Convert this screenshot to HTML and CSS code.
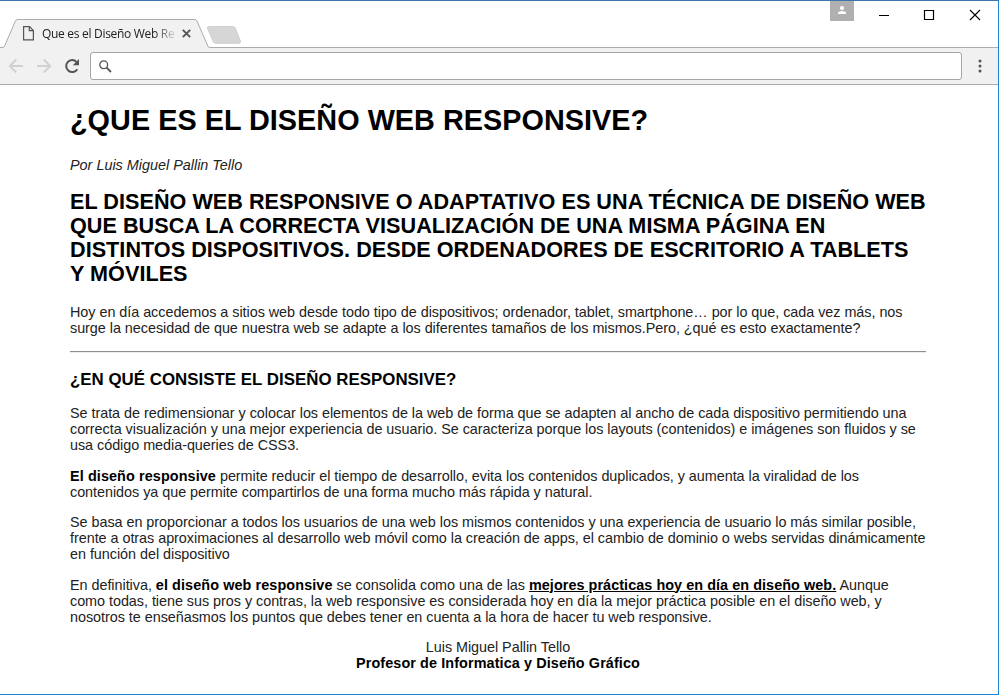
FILE: index.html
```html
<!DOCTYPE html>
<html lang="es">
<head>
<meta charset="utf-8">
<title>Que es el Diseño Web Responsive</title>
<link rel="stylesheet" href="styles.css">
</head>
<body>
<div class="window">
  <header class="titlebar">
    <div class="tab">
      <svg class="tab-shape" width="211" height="29" viewBox="0 0 211 29"><path d="M0 28.5H2.5Q4 28.5 4.6 27L15.4 2Q16.2.5 18 .5H194.500Q196.300.5 197 2L207.800 27Q208.400 28.500 210 28.500H211V29H0Z" fill="#f1f1f1"/><path d="M0 28.5H2.500Q4 28.5 4.600 27L15.400 2Q16.200.5 18 .5H194.500Q196.300.5 197 2L207.800 27Q208.400 28.500 210 28.500H211" fill="none" stroke="#ababab"/></svg>
      <div class="tab-content">
        <svg width="11" height="15" viewBox="0 0 11 15" fill="none" stroke="#555" stroke-width="1.2"><path d="M.6.600H6.500L10.400 4.500V13.900H.6ZM6.300.8V4.700H10.200"/></svg>
        <span class="tab-title">Que es el Diseño Web Re</span>
        <svg width="9" height="9" viewBox="0 0 9 9" stroke="#555" stroke-width="1.9"><path d="M.8.8 8.200 8.200M8.200.8.800 8.200"/></svg>
      </div>
    </div>
    <svg class="new-tab" width="36" height="18" viewBox="0 0 36 18"><path d="M2.500.5H26.500Q28.500.5 29.300 2L34.500 15Q35 17.300 33 17.300H10Q8 17.300 7.300 15.800L1.500 2.500Q.8.500 2.500.5Z" fill="#d6d6d6" stroke="#c9c9c9" stroke-width=".8"/></svg>
    <div class="controls">
      <svg class="user" width="24" height="20" viewBox="0 0 24 20"><path d="M0 0H24V20H0Z" fill="#b0b0b0"/><circle cx="12" cy="7" r="2.100" fill="#fff"/><path d="M8 13V11.800Q8.500 10 12 10T16 11.800V13Z" fill="#fff"/></svg>
      <svg class="buttons" width="104" height="12" viewBox="0 0 104 12" fill="none" stroke="#000"><path d="M1 6.500H11"/><path d="M46.500 1.500H55.500V10.500H46.500Z" stroke-width="1.200"/><path d="M92 1 102 11M102 1 92 11" stroke-width="1.100"/></svg>
    </div>
  </header>
  <nav class="toolbar">
    <svg class="nav" width="74" height="16" viewBox="0 0 74 16" fill="none" stroke="#d0d0d0" stroke-width="1.800"><path d="M15 8H2M8.300 1.500 1.800 8 8.300 14.500M29 8H42M35.700 1.500 42.200 8 35.700 14.500"/><path d="M69.300 11.200A6 6 0 1 1 68.500 3.900" stroke="#555" stroke-width="2"/><path d="M71 1V7.200H64.800Z" fill="#555" stroke="none"/></svg>
    <div class="address">
      <svg width="13" height="13" viewBox="0 0 13 13" fill="none" stroke="#555"><circle cx="4.700" cy="4.700" r="3.900" stroke-width="1.300"/><path d="M7.600 7.600 12 12" stroke-width="1.800"/></svg>
    </div>
    <svg class="menu" width="4" height="14" viewBox="0 0 4 14" fill="#555"><circle cx="2" cy="2" r="1.500"/><circle cx="2" cy="7" r="1.500"/><circle cx="2" cy="12" r="1.500"/></svg>
  </nav>
  <main>
    <h1>¿QUE ES EL DISEÑO WEB RESPONSIVE?</h1>
    <p><em>Por Luis Miguel Pallin Tello</em></p>
    <h2>EL DISEÑO WEB RESPONSIVE O ADAPTATIVO ES UNA TÉCNICA DE DISEÑO WEB<br>QUE BUSCA LA CORRECTA VISUALIZACIÓN DE UNA MISMA PÁGINA EN<br>DISTINTOS DISPOSITIVOS. DESDE ORDENADORES DE ESCRITORIO A TABLETS<br>Y MÓVILES</h2>
    <p>Hoy en día accedemos a sitios web desde todo tipo de dispositivos; ordenador, tablet, smartphone… por lo que, cada vez más, nos<br>surge la necesidad de que nuestra web se adapte a los diferentes tamaños de los mismos.Pero, ¿qué es esto exactamente?</p>
    <hr>
    <h3>¿EN QUÉ CONSISTE EL DISEÑO RESPONSIVE?</h3>
    <p>Se trata de redimensionar y colocar los elementos de la web de forma que se adapten al ancho de cada dispositivo permitiendo una<br>correcta visualización y una mejor experiencia de usuario. Se caracteriza porque los layouts (contenidos) e imágenes son fluidos y se<br>usa código media-queries de CSS3.</p>
    <p><strong>El diseño responsive</strong> permite reducir el tiempo de desarrollo, evita los contenidos duplicados, y aumenta la viralidad de los<br>contenidos ya que permite compartirlos de una forma mucho más rápida y natural.</p>
    <p>Se basa en proporcionar a todos los usuarios de una web los mismos contenidos y una experiencia de usuario lo más similar posible,<br>frente a otras aproximaciones al desarrollo web móvil como la creación de apps, el cambio de dominio o webs servidas dinámicamente<br>en función del dispositivo</p>
    <p>En definitiva, <strong>el diseño web responsive</strong> se consolida como una de las <strong class="key"><u>mejores prácticas hoy en día en diseño web.</u></strong> Aunque<br>como todas, tiene sus pros y contras, la web responsive es considerada hoy en día la mejor práctica posible en el diseño web, y<br>nosotros te enseñasmos los puntos que debes tener en cuenta a la hora de hacer tu web responsive.</p>
    <p class="signature">Luis Miguel Pallin Tello<br><strong>Profesor de Informatica y Diseño Gráfico</strong></p>
  </main>
</div>
</body>
</html>
```
FILE: styles.css
```css
* { box-sizing: border-box; }
body { margin: 0; background: #fff; }
svg { display: block; flex: none; }

.window {
  height: 695px;
  overflow: hidden;
  border: solid #1e82d2;
  border-width: 1px 1px 1px 0;
  border-top-color: #3c76ac;
}

.titlebar {
  display: flex;
  height: 47px;
  background: linear-gradient(#ababab, #ababab) bottom / 100% 1px no-repeat;
}
.tab { display: grid; width: 206px; margin-top: 18px; }
.tab > * { grid-area: 1 / 1; }
.tab-content {
  display: flex;
  align-items: center;
  height: 29px;
  padding-left: 23px;
}
.tab-title {
  width: 134px;
  margin: 0 6px 0 8px;
  white-space: nowrap;
  font: 12px/18px "Open Sans", sans-serif;
  letter-spacing: -0.3px;
  color: #222;
  -webkit-mask-image: linear-gradient(90deg, #000 112px, transparent 136px);
  mask-image: linear-gradient(90deg, #000 112px, transparent 136px);
}
.new-tab { margin-top: 25px; }
.controls { display: flex; margin-left: auto; }
.buttons { margin: 8px 16px 0 24px; }

.toolbar {
  display: flex;
  align-items: center;
  height: 37px;
  padding: 0 16px 0 8px;
  background: #f1f1f1;
  border-bottom: 1px solid #ababab;
}
.address {
  display: flex;
  align-items: center;
  flex: 1;
  height: 28px;
  margin: 0 16px 0 8px;
  padding-left: 8px;
  background: #fff;
  border: 1px solid #a6a6a6;
  border-radius: 3px;
}

main {
  display: flow-root;
  padding: 0 72px 0 70px;
  font: 14.4px/16px "Liberation Sans", Arial, sans-serif;
  letter-spacing: -0.04px;
  white-space: nowrap;
  color: #222;
}
h1, h2, h3, strong { color: #000; font-weight: bold; }
h1 { margin: 19.3px 0; font-size: 28.8px; line-height: 33px; letter-spacing: 0.03px; }
h2 { margin: 17px 0 18.6px; font-size: 21.6px; line-height: 24px; letter-spacing: 0.04px; }
h3 { margin: 17px 0 16.8px; font-size: 16.85px; line-height: 19px; letter-spacing: 0.03px; }
p { margin: 14.4px 0; }
em { letter-spacing: 0; }
strong { letter-spacing: 0.1px; }
.key { letter-spacing: 0.06px; }
hr { margin: 14.4px 0; border: solid; border-width: 1px 0; border-color: #8e8e8e #e4e4e4 #eee; }
.signature { text-align: center; }
```
